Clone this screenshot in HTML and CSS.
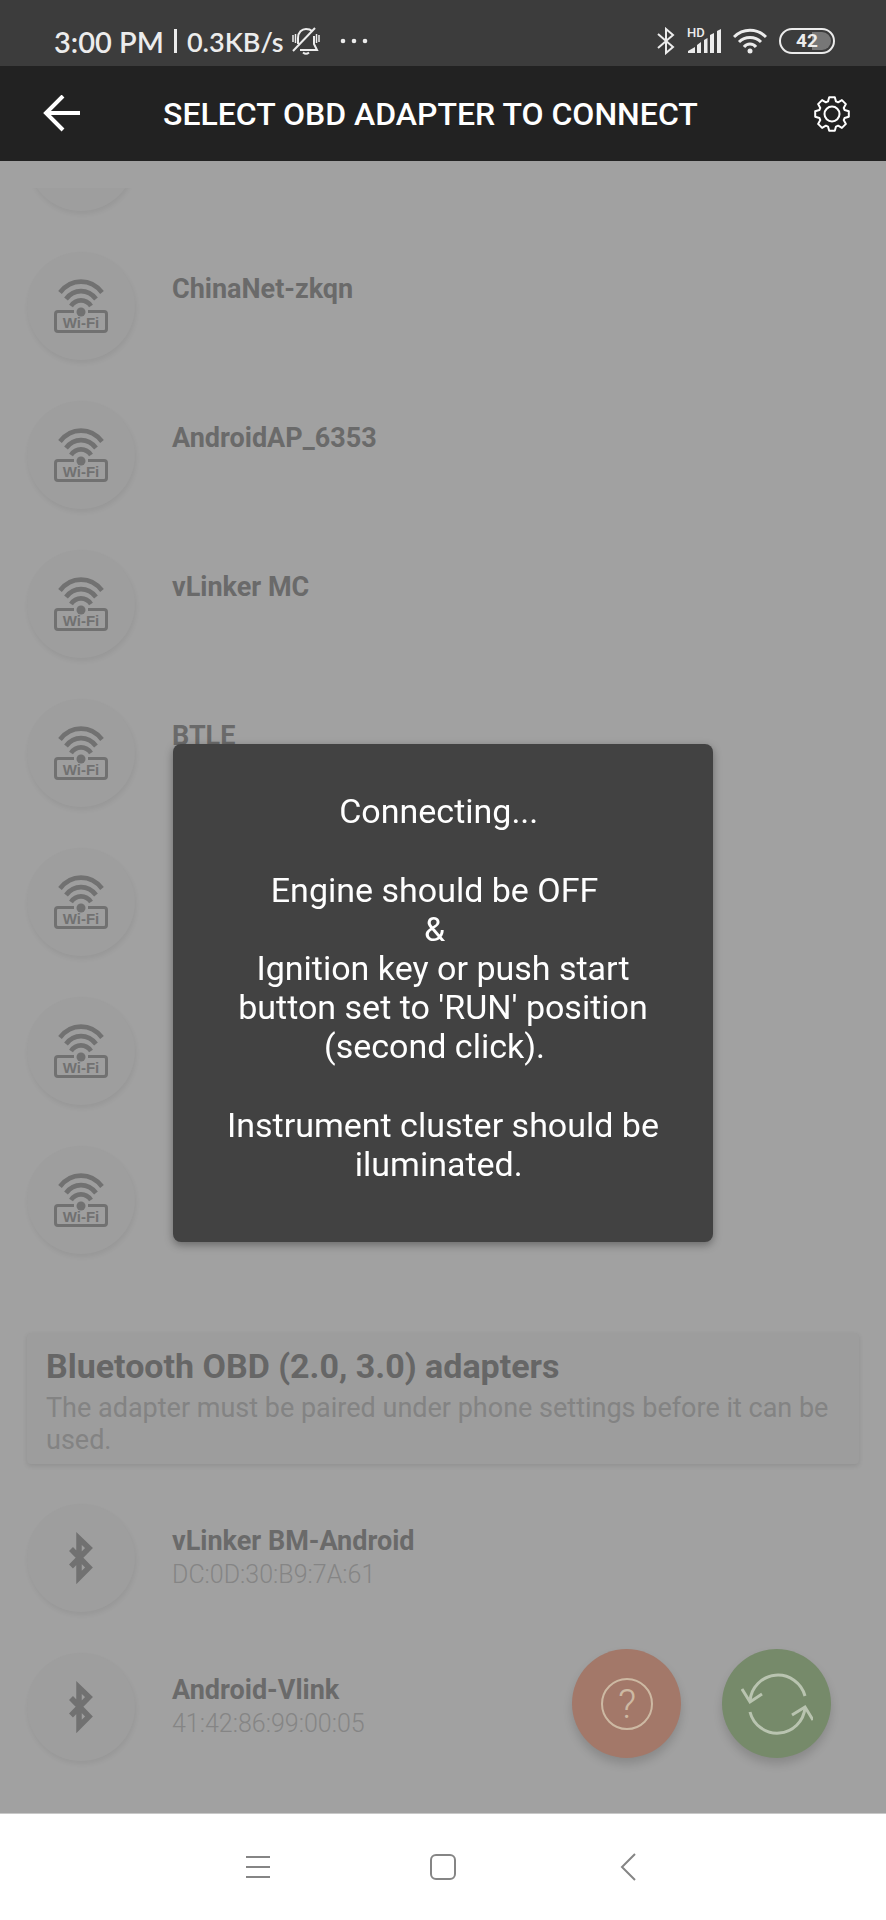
FILE: index.html
```html
<!DOCTYPE html>
<html lang="en">
<head>
    <meta charset="UTF-8">
    <meta name="viewport" content="width=device-width, initial-scale=1.0">
    <title>Select OBD adapter to connect</title>
    <link rel="stylesheet" href="styles.css">
</head>
<body>
    <!-- Shared icons -->
    <svg class="sprite" aria-hidden="true">
        <symbol id="icon-wifi-router" viewBox="0 0 54 54">
            <g fill="none" stroke="currentColor" stroke-width="4.600">
                <path d="M6 13.500C17 -1 37 -1 48 13.500" />
                <path d="M12 20C20 9.500 34 9.500 42 20" />
                <path d="M17 27C22 19.500 32 19.500 37 27" />
                <path d="M20 32.500H4Q1.500 32.500 1.500 35V50Q1.500 52.500 4 52.500H50Q52.500 52.500 52.500 50V35Q52.500 32.500 50 32.500H34" stroke-width="3" />
            </g>
            <circle cx="27" cy="33" r="4.500" fill="currentColor" />
        </symbol>
        <symbol id="icon-bluetooth" viewBox="0 0 24 54">
            <path d="M2 18L20 36.500L10 46.500V7.500L20 17L2 35.500" fill="none" stroke="currentColor" stroke-width="5.500" />
        </symbol>
    </svg>

    <div class="status-bar">
        <span class="status-time">3:00 PM</span>
        <span class="status-divider"></span>
        <span class="status-speed">0.3KB/s</span>
        <svg class="status-bell" width="28" height="28" viewBox="0 0 28 28" fill="none" stroke="currentColor" stroke-width="2">
            <path d="M6 17V11C6 5 10 2 14 2C17 2 19 3 20 4M22 9V17L25 23H8" />
            <path d="M1 24L23 1" />
            <path d="M11 25.500Q14 28 17 25.500" />
            <path d="M1 8V15M3.500 7V16M24.500 7V16M27 8V15" stroke-width="1.500" />
        </svg>
        <svg class="status-dots" width="28" height="6" viewBox="0 0 28 6" fill="currentColor">
            <circle cx="3" cy="3" r="2.300" />
            <circle cx="14" cy="3" r="2.300" />
            <circle cx="25" cy="3" r="2.300" />
        </svg>
        <div class="status-right">
            <svg width="18" height="28" viewBox="0 0 18 28" fill="none" stroke="currentColor" stroke-width="2">
                <path d="M1 7L16 20L9 26V2L16 8L1 21" />
            </svg>
            <svg class="signal" width="34" height="28" viewBox="0 0 34 28" fill="currentColor">
                <text class="hd-label" x="0" y="10">HD</text>
                <path d="M1 26V24L8 20V26ZM10 26V18L14 15V26ZM17 26V13L20.500 11V26ZM23 26V8L27 6V26ZM30 26V4L34 2V26Z" />
            </svg>
            <svg width="34" height="28" viewBox="0 0 34 28" fill="none" stroke="currentColor" stroke-width="3">
                <path d="M1 10C10 1 24 1 33 10" />
                <path d="M6 15C12 9 22 9 28 15" />
                <path d="M11 20C14 16 20 16 23 20" />
                <circle cx="17" cy="24" r="2.500" fill="currentColor" stroke="none" />
            </svg>
            <span class="battery"><span class="battery-level">42</span></span>
        </div>
    </div>

    <header class="header">
        <button type="button" class="icon-button" aria-label="Back">
            <svg width="38" height="38" viewBox="0 0 38 38" fill="none" stroke="currentColor" stroke-width="4">
                <path d="M37 18H4M20 1L3 18L20 35" />
            </svg>
        </button>
        <h1 class="title">SELECT OBD ADAPTER TO CONNECT</h1>
        <button type="button" class="icon-button" aria-label="Settings">
            <svg width="36" height="36" viewBox="0 0 36 36" fill="none" stroke="currentColor" stroke-width="2" stroke-linejoin="round">
                <path d="M14 5.400L15.200 1.200H20.800L22 5.400L24.100 6.300L27.900 4.100L31.900 8.100L29.700 11.900L30.600 14L34.800 15.200V20.800L30.600 22L29.700 24.100L31.900 27.900L27.900 31.900L24.100 29.700L22 30.600L20.800 34.800H15.200L14 30.600L11.900 29.700L8.100 31.900L4.100 27.900L6.300 24.100L5.400 22L1.200 20.800V15.200L5.400 14L6.300 11.900L4.100 8.100L8.100 4.100L11.900 6.300Z" />
                <circle cx="18" cy="18" r="7.500" />
            </svg>
        </button>
    </header>

    <main class="content">
        <div class="scroll-area">
            <ul class="adapter-list wifi-list">
                <li class="adapter"><span class="avatar"></span></li>
                <li class="adapter">
                    <span class="avatar">
                        <svg width="54" height="54">
                            <use href="#icon-wifi-router" />
                            <text class="wifi-label" x="27" y="49">Wi-Fi</text>
                        </svg>
                    </span>
                    <div class="adapter-info"><div class="adapter-name">ChinaNet-zkqn</div></div>
                </li>
                <li class="adapter">
                    <span class="avatar">
                        <svg width="54" height="54">
                            <use href="#icon-wifi-router" />
                            <text class="wifi-label" x="27" y="49">Wi-Fi</text>
                        </svg>
                    </span>
                    <div class="adapter-info"><div class="adapter-name">AndroidAP_6353</div></div>
                </li>
                <li class="adapter">
                    <span class="avatar">
                        <svg width="54" height="54">
                            <use href="#icon-wifi-router" />
                            <text class="wifi-label" x="27" y="49">Wi-Fi</text>
                        </svg>
                    </span>
                    <div class="adapter-info"><div class="adapter-name">vLinker MC</div></div>
                </li>
                <li class="adapter">
                    <span class="avatar">
                        <svg width="54" height="54">
                            <use href="#icon-wifi-router" />
                            <text class="wifi-label" x="27" y="49">Wi-Fi</text>
                        </svg>
                    </span>
                    <div class="adapter-info"><div class="adapter-name">BTLE</div></div>
                </li>
                <li class="adapter">
                    <span class="avatar">
                        <svg width="54" height="54">
                            <use href="#icon-wifi-router" />
                            <text class="wifi-label" x="27" y="49">Wi-Fi</text>
                        </svg>
                    </span>
                </li>
                <li class="adapter">
                    <span class="avatar">
                        <svg width="54" height="54">
                            <use href="#icon-wifi-router" />
                            <text class="wifi-label" x="27" y="49">Wi-Fi</text>
                        </svg>
                    </span>
                </li>
                <li class="adapter">
                    <span class="avatar">
                        <svg width="54" height="54">
                            <use href="#icon-wifi-router" />
                            <text class="wifi-label" x="27" y="49">Wi-Fi</text>
                        </svg>
                    </span>
                </li>
            </ul>

            <section class="section-card">
                <h2 class="section-title">Bluetooth OBD (2.0, 3.0) adapters</h2>
                <p class="section-text">The adapter must be paired under phone settings before it can be used.</p>
            </section>

            <ul class="adapter-list">
                <li class="adapter">
                    <span class="avatar"><svg width="24" height="54"><use href="#icon-bluetooth" /></svg></span>
                    <div class="adapter-info">
                        <div class="adapter-name">vLinker BM-Android</div>
                        <div class="adapter-address">DC:0D:30:B9:7A:61</div>
                    </div>
                </li>
                <li class="adapter">
                    <span class="avatar"><svg width="24" height="54"><use href="#icon-bluetooth" /></svg></span>
                    <div class="adapter-info">
                        <div class="adapter-name">Android-Vlink</div>
                        <div class="adapter-address">41:42:86:99:00:05</div>
                    </div>
                </li>
            </ul>
        </div>

        <div class="fab-group">
            <button type="button" class="fab fab-help" aria-label="Help">
                <svg width="54" height="54" viewBox="0 0 54 54">
                    <circle cx="27" cy="27" r="25" fill="none" stroke="currentColor" stroke-width="2" />
                    <text class="help-mark" x="27" y="41">?</text>
                </svg>
            </button>
            <button type="button" class="fab fab-refresh" aria-label="Refresh">
                <svg width="72" height="62" viewBox="0 0 72 62" fill="none" stroke="currentColor" stroke-width="3">
                    <path d="M9 28A28 28 0 0 1 64 23" />
                    <path d="M1 16L9 29L21 21" />
                    <path d="M9 39A28 28 0 0 0 64 35" />
                    <path d="M51 42L64 34L72 47" />
                </svg>
            </button>
        </div>

        <div class="overlay">
            <div class="dialog" role="dialog" aria-label="Connecting">
                <p>Connecting...&nbsp;</p>
                <p>Engine should be OFF&nbsp;&nbsp;<br>&amp;&nbsp;&nbsp;<br>Ignition key or push start button set to 'RUN' position (second click).&nbsp;&nbsp;</p>
                <p>Instrument cluster should be iluminated.&nbsp;</p>
            </div>
        </div>
    </main>

    <nav class="nav-bar">
        <button type="button" class="nav-button" aria-label="Recent apps">
            <svg width="28" height="28" viewBox="0 0 28 28" fill="none" stroke="currentColor" stroke-width="2">
                <path d="M2 4H26M2 14H26M2 24H26" />
            </svg>
        </button>
        <button type="button" class="nav-button" aria-label="Home">
            <svg width="28" height="28" viewBox="0 0 28 28" fill="none" stroke="currentColor" stroke-width="2">
                <rect x="2" y="2" width="24" height="24" rx="5" />
            </svg>
        </button>
        <button type="button" class="nav-button" aria-label="Back">
            <svg width="28" height="28" viewBox="0 0 28 28" fill="none" stroke="currentColor" stroke-width="2">
                <path d="M21 1L8 14L21 27" />
            </svg>
        </button>
    </nav>
</body>
</html>
```
FILE: styles.css
```css
* {
    margin: 0;
    padding: 0;
    box-sizing: border-box;
}

body {
    font-family: Roboto, "Liberation Sans", sans-serif;
    background: #a1a1a1;
    min-height: 100vh;
    display: flex;
    flex-direction: column;
}

button {
    border: none;
    background: none;
    color: inherit;
    font-family: inherit;
    cursor: pointer;
}

svg {
    display: block;
}

.sprite {
    position: absolute;
    width: 0;
    height: 0;
}

/* Status bar */
.status-bar {
    display: flex;
    align-items: center;
    height: 66px;
    padding: 16px 51px 0 54px;
    background: #3c3c3c;
    color: #ececec;
    font-family: Lato, "Liberation Sans", sans-serif;
    font-weight: 600;
}

.status-time {
    font-size: 29px;
}

.status-divider {
    width: 3px;
    height: 24px;
    margin: 0 10px;
    background: #ececec;
}

.status-speed {
    font-size: 27px;
}

.status-bell {
    margin-left: 8px;
}

.status-dots {
    margin-left: 20px;
}

.status-right {
    display: flex;
    align-items: center;
    gap: 12px;
    margin-left: auto;
}

.signal {
    overflow: visible;
}

.hd-label {
    font-family: Roboto, "Liberation Sans", sans-serif;
    font-size: 13px;
    font-weight: 500;
}

.battery {
    width: 56px;
    height: 26px;
    padding: 2px;
    border: 2px solid #ececec;
    border-radius: 13px;
}

.battery-level {
    display: block;
    height: 18px;
    border-radius: 9px;
    background: linear-gradient(90deg, #3c3c3c 60%, #777 60%);
    font-family: Roboto, "Liberation Sans", sans-serif;
    font-size: 19px;
    font-weight: 700;
    line-height: 18px;
    text-align: center;
}

/* Header */
.header {
    display: flex;
    align-items: center;
    height: 95px;
    padding: 0 36px 0 43px;
    background: #222;
    color: #fff;
}

.title {
    flex: 1;
    padding-left: 82px;
    font-size: 32px;
    font-weight: 500;
}

/* Adapter list */
.content {
    position: relative;
    flex: 1;
    padding-top: 27px;
}

.scroll-area {
    overflow: hidden;
    padding: 0 27px;
}

.adapter-list {
    list-style: none;
}

/* the first row is scrolled most of the way out */
.wifi-list {
    margin-top: -85px;
}

.adapter {
    display: flex;
    gap: 37px;
    height: 149px;
}

.avatar {
    display: flex;
    align-items: center;
    justify-content: center;
    width: 108px;
    height: 108px;
    border-radius: 50%;
    background: #9e9e9e;
    box-shadow: 1px 3px 5px rgba(0, 0, 0, 0.06);
    color: #717171;
}

.wifi-label {
    fill: currentColor;
    font-family: "Liberation Sans", sans-serif;
    font-size: 15px;
    font-weight: 700;
    text-anchor: middle;
}

.adapter-info {
    padding-top: 21px;
    line-height: 33px;
}

.adapter-name {
    color: #6a6a6a;
    font-size: 27px;
    font-weight: 700;
}

.adapter-address {
    color: #858585;
    font-size: 25px;
    font-weight: 300;
}

.section-card {
    margin: 38px 0 40px;
    padding: 13px 19px 8px;
    border-radius: 4px;
    background: #9d9d9d;
    box-shadow: 0 2px 5px rgba(0, 0, 0, 0.1);
}

.section-title {
    margin-bottom: 6px;
    color: #666;
    font-size: 34px;
    font-weight: 700;
    line-height: 40px;
}

.section-text {
    color: #838383;
    font-size: 27px;
    line-height: 32px;
}

/* Floating buttons */
.fab-group {
    position: absolute;
    right: 55px;
    bottom: 55px;
    display: flex;
    gap: 41px;
}

.fab {
    display: flex;
    align-items: center;
    justify-content: center;
    width: 109px;
    height: 109px;
    border-radius: 50%;
    box-shadow: 0 6px 10px rgba(0, 0, 0, 0.15);
}

.fab-help {
    background: #a37869;
    color: #cdb9a3;
}

.fab-refresh {
    background: #768a6a;
    color: #b9c4b0;
}

.help-mark {
    fill: currentColor;
    font-size: 40px;
    font-weight: 300;
    text-anchor: middle;
}

/* Dialog */
.overlay {
    position: fixed;
    inset: 66px 0 0;
    display: flex;
    align-items: center;
    justify-content: center;
}

.dialog {
    width: 61%;
    padding: 48px 54px 58px;
    border-radius: 8px;
    background: #424242;
    box-shadow: 0 3px 8px rgba(0, 0, 0, 0.35);
    color: #fff;
    font-size: 34px;
    line-height: 39px;
    text-align: center;
}

.dialog p + p {
    margin-top: 40px;
}

/* Navigation bar */
.nav-bar {
    display: flex;
    justify-content: center;
    height: 107px;
    border-top: 1px solid #c8c8c8;
    background: #fff;
    color: #858585;
}

.nav-button {
    display: flex;
    align-items: center;
    justify-content: center;
    width: 185px;
}
```
